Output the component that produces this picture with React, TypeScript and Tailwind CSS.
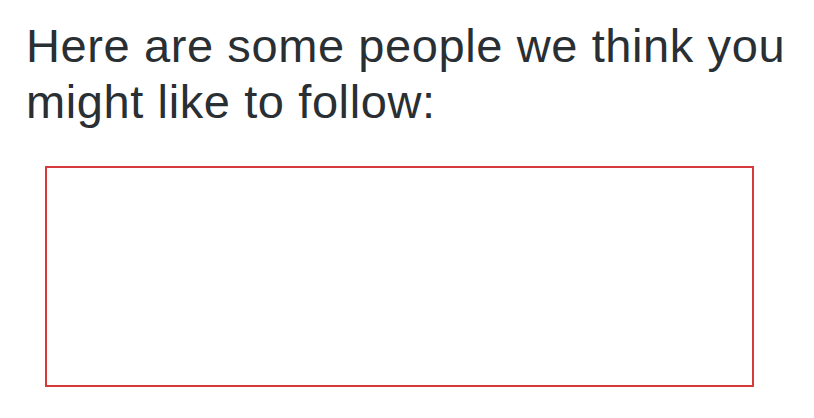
export default function App() {
  return (
    <div className="w-[814px] h-[418px] bg-white overflow-hidden">
      <div className="pt-[18px] pl-[26px]">
        <p className="text-[47px] leading-[56px] tracking-[0.6px] text-[#292f33] font-['Liberation_Sans',Arial,sans-serif]">
          Here are some people we think you
          <br />
          might like to follow:
        </p>
        <div className="mt-[36px] ml-[19px] w-[709px] h-[221px] border-2 border-[#d63a3a]" />
      </div>
    </div>
  );
}
